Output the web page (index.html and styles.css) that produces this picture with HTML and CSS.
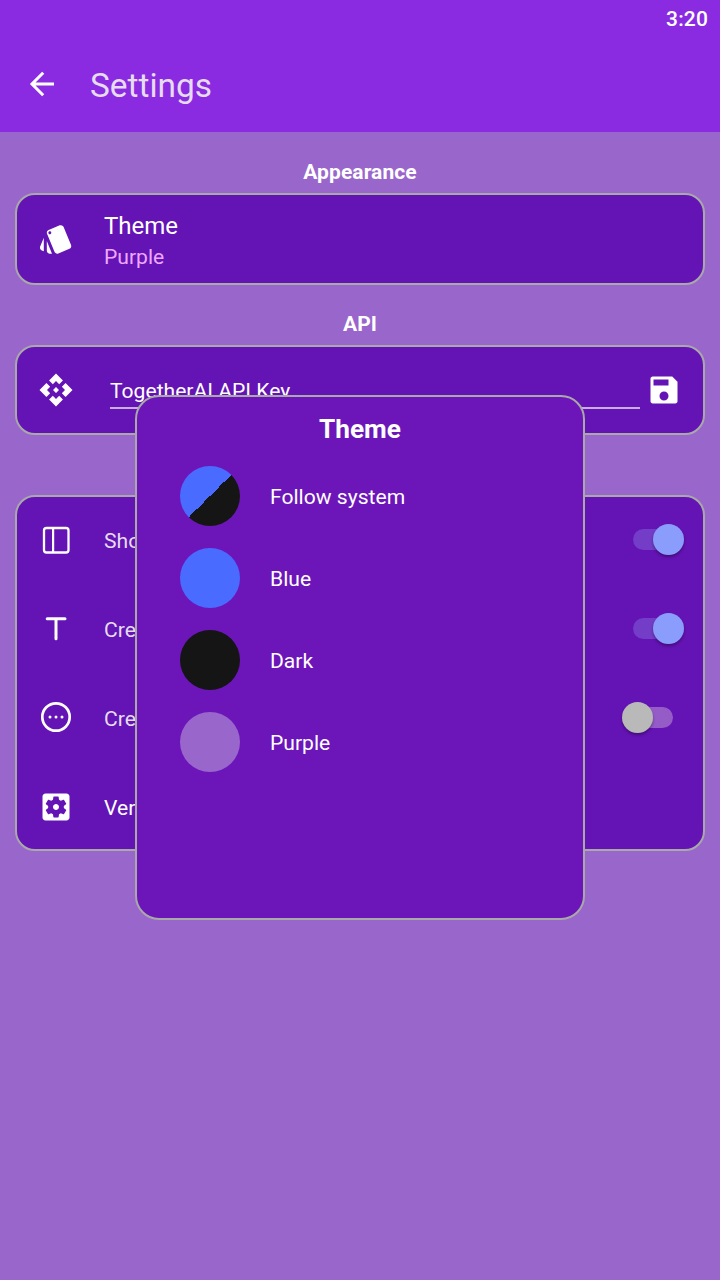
FILE: index.html
```html
<!DOCTYPE html>
<html lang="en">
<head>
<meta charset="utf-8">
<title>Settings</title>
<link rel="stylesheet" href="styles.css">
</head>
<body>
<header class="top">
  <div class="status">3:20</div>
  <div class="toolbar">
    <svg class="back" viewBox="0 0 36 36"><path d="M30 18H8.500M19.200 6.800L8 18L19.200 29.200" fill="none" stroke="#fff" stroke-width="3"/></svg>
    <h1 class="title">Settings</h1>
  </div>
</header>
<main class="content">
  <h2 class="heading">Appearance</h2>
  <section class="card card-theme">
    <svg class="icon" viewBox="0 0 24 24"><path d="M2.530 19.650l1.340.560v-9.030l-2.430 5.860c-.410 1.020.080 2.190 1.090 2.610zm19.500-3.700L17.070 3.980c-.310-.750-1.040-1.210-1.810-1.230-.260 0-.530.040-.790.150L7.100 5.950c-.750.310-1.210 1.030-1.230 1.800-.010.270.040.540.150.800l4.960 11.970c.310.760 1.050 1.220 1.830 1.230.260 0 .520-.050.770-.150l7.360-3.050c1.020-.420 1.510-1.590 1.090-2.600zM7.880 8.750c-.550 0-1-.450-1-1s.450-1 1-1 1 .450 1 1-.450 1-1 1zm-2 11c0 1.100.900 2 2 2h1.450l-3.450-8.340v6.340z"/></svg>
    <div class="labels">
      <div class="name">Theme</div>
      <div class="value">Purple</div>
    </div>
  </section>
  <h2 class="heading heading-api">API</h2>
  <section class="card card-api">
    <svg class="icon" viewBox="0 0 24 24"><path d="M14 12l-2 2-2-2 2-2zM12 6l2.120 2.120 2.500-2.500L12 1 7.380 5.620l2.500 2.500zM6 12l2.120-2.120-2.500-2.500L1 12l4.620 4.620 2.500-2.500zM18 12l-2.120 2.120 2.500 2.500L23 12l-4.620-4.620-2.500 2.500zM12 18l-2.120-2.120-2.500 2.500L12 23l4.620-4.620-2.500-2.500z"/></svg>
    <div class="field">TogetherAI API Key</div>
    <svg class="icon save" viewBox="0 0 24 24"><path d="M17.500 3H4.500C3.670 3 3 3.670 3 4.500v15c0 .830.670 1.500 1.500 1.500h15c.830 0 1.500-.670 1.500-1.500V6.500zM12 19a3 3 0 1 1 0-6 3 3 0 0 1 0 6zM15 9H5V5h10z"/></svg>
  </section>
  <section class="card card-options">
    <div class="row">
      <svg class="icon" viewBox="0 0 36 36"><rect x="6" y="6" width="24.500" height="24.500" rx="2.500" fill="none" stroke="#fff" stroke-width="2.300"/><path d="M14 6h2.200v24h-2.200z"/></svg>
      <span class="text">Show</span>
      <span class="switch on"><i class="knob"></i></span>
    </div>
    <div class="row">
      <svg class="icon" viewBox="0 0 36 36"><path d="M9.200 7.700H27M18 7.700V27.700" fill="none" stroke="#fff" stroke-width="3" stroke-linecap="round"/></svg>
      <span class="text">Create</span>
      <span class="switch on"><i class="knob"></i></span>
    </div>
    <div class="row">
      <svg class="icon" viewBox="0 0 36 36"><circle cx="18" cy="17" r="13.700" fill="none" stroke="#fff" stroke-width="2.700"/><circle cx="12" cy="17" r="1.500"/><circle cx="18" cy="17" r="1.500"/><circle cx="24" cy="17" r="1.500"/></svg>
      <span class="text">Create</span>
      <span class="switch"><i class="knob"></i></span>
    </div>
    <div class="row">
      <svg class="icon" viewBox="0 0 24 24"><path d="M12 10c-1.100 0-2 .900-2 2s.900 2 2 2 2-.900 2-2-.900-2-2-2zm7-7H5c-1.110 0-2 .900-2 2v14c0 1.100.890 2 2 2h14c1.110 0 2-.900 2-2V5c0-1.100-.890-2-2-2zm-1.750 9c0 .230-.020.460-.050.680l1.480 1.160c.130.110.170.300.080.450l-1.400 2.420c-.090.150-.270.210-.430.150l-1.740-.700c-.360.280-.760.510-1.180.690l-.260 1.850c-.030.170-.180.300-.350.300h-2.800c-.170 0-.320-.130-.350-.290l-.260-1.850c-.430-.180-.820-.410-1.180-.690l-1.740.700c-.160.060-.340 0-.430-.150l-1.400-2.420c-.090-.150-.050-.340.080-.450l1.480-1.160c-.030-.230-.050-.460-.050-.690 0-.230.020-.460.050-.680l-1.480-1.160c-.130-.110-.170-.300-.080-.450l1.400-2.420c.090-.150.270-.210.430-.150l1.740.700c.360-.280.760-.510 1.180-.690l.260-1.850c.030-.170.180-.300.350-.300h2.800c.170 0 .320.130.350.290l.260 1.850c.430.180.820.410 1.180.690l1.740-.700c.160-.060.340 0 .430.150l1.400 2.420c.090.150.050.340-.080.450l-1.480 1.160c.030.230.050.460.050.690z"/></svg>
      <span class="text bright">Version</span>
    </div>
  </section>
</main>
<div class="dialog" role="dialog">
  <h2 class="dialog-title">Theme</h2>
  <ul class="themes">
    <li class="theme"><span class="swatch system"></span><span class="label">Follow system</span></li>
    <li class="theme"><span class="swatch blue"></span><span class="label">Blue</span></li>
    <li class="theme"><span class="swatch dark"></span><span class="label">Dark</span></li>
    <li class="theme"><span class="swatch purple"></span><span class="label">Purple</span></li>
  </ul>
</div>
</body>
</html>
```

FILE: styles.css
```css
* { box-sizing: border-box; }
body {
  margin: 0;
  width: 720px;
  height: 1280px;
  position: relative;
  overflow: hidden;
  background: #9966cc;
  color: #fff;
  font-family: Roboto, sans-serif;
  font-size: 21.1px;
  line-height: 26px;
}
h1, h2, ul { margin: 0; padding: 0; }
.top { height: 132px; background: #8a2be2; }
.status {
  height: 36px;
  padding: 6px 12px 0 0;
  text-align: right;
  font-size: 21px;
  font-weight: 500;
  letter-spacing: 0.15px;
}
.toolbar {
  height: 96px;
  display: flex;
  align-items: center;
  padding-left: 24px;
}
.back { width: 36px; height: 36px; }
.title {
  margin-left: 30px;
  padding-top: 4px;
  font-size: 33.4px;
  line-height: 40px;
  font-weight: 400;
  color: #e6dcee;
}
.content { padding: 0 15px; }
.heading {
  height: 61px;
  padding-top: 27px;
  text-align: center;
  font-size: 21px;
  font-weight: 700;
  letter-spacing: 0.1px;
}
.heading-api { height: 60px; padding-top: 26px; }
.card {
  border: 2px solid #a9a9a9;
  border-radius: 20px;
  background: #6413b5;
  display: flex;
  align-items: center;
  padding-left: 21px;
}
.icon { width: 36px; height: 36px; fill: #fff; flex: none; }
.card-theme { height: 92px; }
.labels { margin-left: 30px; padding-top: 2px; }
.name { font-size: 24px; line-height: 32px; }
.value { line-height: 29px; color: #f0a8ff; }
.card-api { height: 90px; }
.field {
  width: 530px;
  height: 38px;
  margin: 0 6px 0 36px;
  padding-top: 7px;
  border-bottom: 2px solid #c9aee5;
}
.card-options {
  height: 356px;
  margin-top: 60px;
  flex-direction: column;
  align-items: stretch;
}
.row {
  height: 89px;
  padding-bottom: 3px;
  flex: none;
  display: flex;
  align-items: center;
}
.text { margin-left: 30px; padding-top: 2px; color: #e6dcee; }
.bright { color: #fff; }
.switch {
  width: 40px;
  height: 21px;
  margin: 0 30px 2px auto;
  border-radius: 11px;
  background: #955cc8;
}
.knob {
  display: block;
  width: 31px;
  height: 31px;
  margin: -5px 0 0 -11px;
  border-radius: 50%;
  background: #b9b9b9;
  box-shadow: 0 2px 3px #0005;
}
.on { background: #733dc8; }
.on .knob { margin-left: 20px; background: #8a9cfc; }
.dialog {
  position: absolute;
  left: 135px;
  top: 395px;
  width: 450px;
  height: 525px;
  border: 2px solid #a9a9a9;
  border-radius: 24px;
  background: #6c16ba;
}
.dialog-title {
  padding-top: 16px;
  text-align: center;
  font-size: 26.2px;
  line-height: 32px;
}
.themes {
  list-style: none;
  display: flex;
  flex-direction: column;
  gap: 22px;
  padding: 21px 0 0 43px;
}
.theme { display: flex; align-items: center; gap: 30px; height: 60px; }
.label { padding-top: 2px; }
.swatch { width: 60px; height: 60px; border-radius: 50%; }
.system { background: linear-gradient(135deg, #4a6bff 50%, #151515 50%); }
.blue { background: #4a6bff; }
.dark { background: #151515; }
.purple { background: #9966cc; }
```
